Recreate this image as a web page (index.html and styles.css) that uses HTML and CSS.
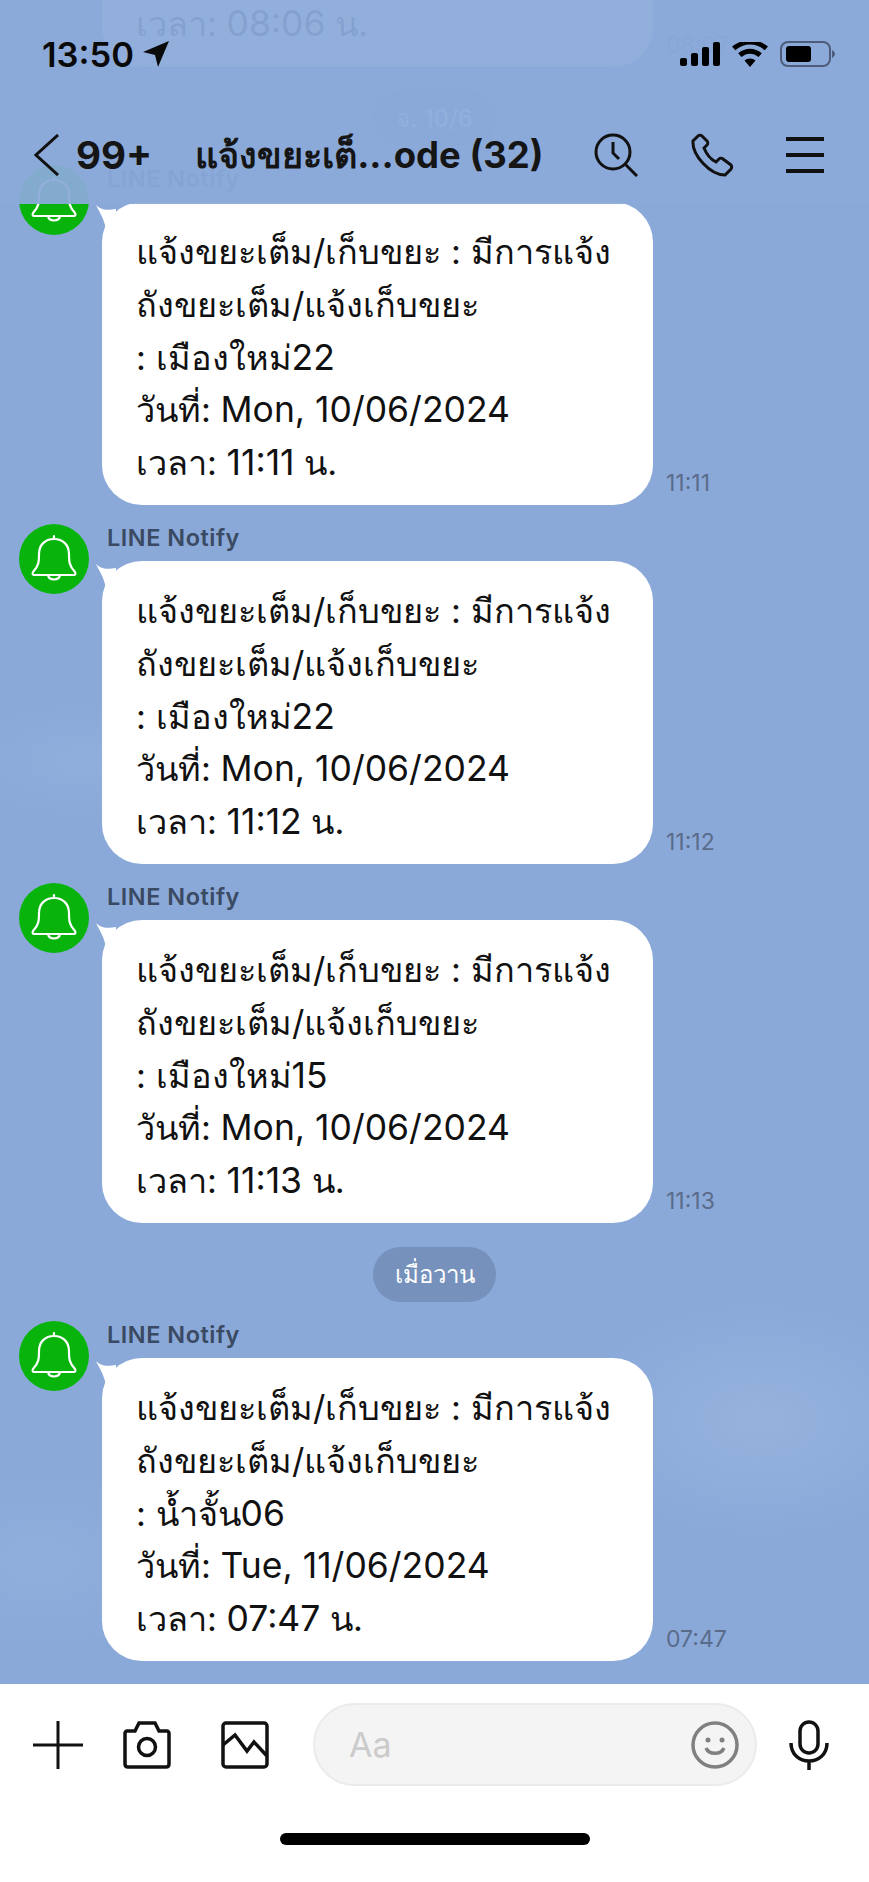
FILE: index.html
```html
<!DOCTYPE html>
<html lang="th">
<head>
  <meta charset="UTF-8">
  <meta name="viewport" content="width=device-width, initial-scale=1.0">
  <title>LINE chat</title>
  <link rel="stylesheet" href="styles.css">
</head>
<body>

<div class="screen">

  <!-- Chat history, pinned to the bottom and clipped at the top -->
  <main class="chat">
    <div class="msg msg-first">
      <div class="msg-body">
        <div class="bubble"><div>เวลา: <span class="en">08:06</span> น.</div></div>
        <span class="time">08:07</span>
      </div>
    </div>

    <div class="date-pill">จ. 10/6</div>

    <div class="msg">
      <div class="avatar">
        <svg viewBox="0 0 70 70"><use href="#bell"/></svg>
      </div>
      <div class="name">LINE Notify</div>
      <div class="msg-body">
        <svg class="tail" viewBox="0 0 20 24"><path d="M0 0C4 4 9 6 20 4L20 24 10 24C8 14 4 8 0 0Z"/></svg>
        <div class="bubble">แจ้งขยะเต็ม/เก็บขยะ : มีการแจ้ง<br>ถังขยะเต็ม/แจ้งเก็บขยะ<br>: เมืองใหม่<span class="en">22</span><br>วันที่: <span class="en">Mon, 10/06/2024</span><br>เวลา: <span class="en">11:11</span> น.</div>
        <span class="time">11:11</span>
      </div>
    </div>

    <div class="msg">
      <div class="avatar">
        <svg viewBox="0 0 70 70"><use href="#bell"/></svg>
      </div>
      <div class="name">LINE Notify</div>
      <div class="msg-body">
        <svg class="tail" viewBox="0 0 20 24"><path d="M0 0C4 4 9 6 20 4L20 24 10 24C8 14 4 8 0 0Z"/></svg>
        <div class="bubble">แจ้งขยะเต็ม/เก็บขยะ : มีการแจ้ง<br>ถังขยะเต็ม/แจ้งเก็บขยะ<br>: เมืองใหม่<span class="en">22</span><br>วันที่: <span class="en">Mon, 10/06/2024</span><br>เวลา: <span class="en">11:12</span> น.</div>
        <span class="time">11:12</span>
      </div>
    </div>

    <div class="msg">
      <div class="avatar">
        <svg viewBox="0 0 70 70"><use href="#bell"/></svg>
      </div>
      <div class="name">LINE Notify</div>
      <div class="msg-body">
        <svg class="tail" viewBox="0 0 20 24"><path d="M0 0C4 4 9 6 20 4L20 24 10 24C8 14 4 8 0 0Z"/></svg>
        <div class="bubble">แจ้งขยะเต็ม/เก็บขยะ : มีการแจ้ง<br>ถังขยะเต็ม/แจ้งเก็บขยะ<br>: เมืองใหม่<span class="en">15</span><br>วันที่: <span class="en">Mon, 10/06/2024</span><br>เวลา: <span class="en">11:13</span> น.</div>
        <span class="time">11:13</span>
      </div>
    </div>

    <div class="date-pill">เมื่อวาน</div>

    <div class="msg">
      <div class="avatar">
        <svg viewBox="0 0 70 70"><use href="#bell"/></svg>
      </div>
      <div class="name">LINE Notify</div>
      <div class="msg-body">
        <svg class="tail" viewBox="0 0 20 24"><path d="M0 0C4 4 9 6 20 4L20 24 10 24C8 14 4 8 0 0Z"/></svg>
        <div class="bubble">แจ้งขยะเต็ม/เก็บขยะ : มีการแจ้ง<br>ถังขยะเต็ม/แจ้งเก็บขยะ<br>: น้ำจั้น<span class="en">06</span><br>วันที่: <span class="en">Tue, 11/06/2024</span><br>เวลา: <span class="en">07:47</span> น.</div>
        <span class="time">07:47</span>
      </div>
    </div>
  </main>

  <!-- Translucent header floats over the scrolled messages -->
  <header class="top">
    <div class="status">
      <div class="clock">
        13:50
        <svg class="loc" viewBox="0 0 27 26"><path d="M26 0L15 26 12 14 0 11Z"/></svg>
      </div>
      <div class="status-icons">
        <svg class="signal" viewBox="0 0 40 24"><rect x="0" y="16" width="7" height="8" rx="2"/><rect x="11" y="11" width="7" height="13" rx="2"/><rect x="22" y="5" width="7" height="19" rx="2"/><rect x="33" y="0" width="7" height="24" rx="2"/></svg>
        <svg class="wifi" viewBox="0 0 36 25"><path d="M18 25L12.500 18.500C15.500 15.800 20.500 15.800 23.500 18.500Z"/><path d="M9.500 15C14.500 10.500 21.500 10.500 26.500 15L29.800 11.300C22.800 5.200 13.200 5.200 6.200 11.300Z"/><path d="M3.300 8.200C12 0.600 24 0.600 32.700 8.200L36 4.500C25.500-4 10.500-4 0 4.500Z"/></svg>
        <svg class="battery" viewBox="0 0 55 26"><rect x="1" y="1" width="49" height="24" rx="7" fill="none" stroke="#4d5c78" stroke-width="2"/><rect x="6" y="5" width="25" height="16" rx="3"/><path d="M52 9c2 1 3 3 3 4s-1 3-3 4z" fill="#4d5c78"/></svg>
      </div>
    </div>
    <div class="navbar">
      <svg class="back" viewBox="0 0 26 42"><path d="M24 1L2 21 24 41"/></svg>
      <span class="unread">99+</span>
      <span class="title">แจ้งขยะเต็<span class="title-en">...ode (32)</span></span>
      <div class="nav-icons">
        <svg class="nav-icon" viewBox="0 0 44 44"><circle cx="19" cy="19" r="17"/><path d="M19 9v11l6 6M31 31l12 12"/></svg>
        <svg class="nav-icon" viewBox="0 0 44 44"><path d="M8 3L3 8C2 22 20 42 35 42L41 36C42 34 42 33 41 32L33 26C32 25 30 25 29 26L26 29C20 26 16 20 14 15L17 12C18 11 18 9 17 8L12 3C11 2 9 2 8 3Z"/></svg>
        <svg class="nav-icon nav-menu" viewBox="0 0 38 36"><path d="M0 2H38M0 18H38M0 34H38"/></svg>
      </div>
    </div>
  </header>

  <footer class="composer">
    <div class="composer-row">
      <svg class="tool tool-plus" viewBox="0 0 50 48"><path d="M25 0V48M0 24H50"/></svg>
      <svg class="tool tool-cam" viewBox="0 0 48 48"><path d="M4 10C3 10 2 11 2 12V43C2 45 3 46 5 46H43C45 46 46 45 46 43V12C46 11 45 10 44 10H36L32 2H16L12 10Z"/><circle cx="24" cy="26" r="8.500"/></svg>
      <svg class="tool tool-pic" viewBox="0 0 48 48"><rect x="2" y="2" width="44" height="44" rx="3"/><path d="M2 24L14 14 26 30 33 21 46 35"/></svg>
      <div class="input-pill">
        <span class="placeholder">Aa</span>
        <svg class="smile" viewBox="0 0 48 48"><circle cx="24" cy="24" r="22"/><path d="M15 27C18 34 30 34 33 27"/><circle class="eye" cx="17" cy="19" r="2.500"/><circle class="eye" cx="31" cy="19" r="2.500"/></svg>
      </div>
      <svg class="tool tool-mic" viewBox="0 0 40 50"><rect x="11" y="2" width="18" height="31" rx="9"/><path d="M2 23C2 47 38 47 38 23M20 41V50"/></svg>
    </div>
    <div class="home-bar"></div>
  </footer>
</div>

<!-- shared bell icon -->
<svg class="defs" width="0" height="0">
  <symbol id="bell" viewBox="0 0 70 70">
    <path d="M14 48C20 42 20 37 20 30C20 21 26 15 35 15C44 15 50 21 50 30C50 37 50 42 56 48C57 50 56 51 55 51H15C14 51 13 50 14 48Z" fill="none" stroke="#fff" stroke-width="2.200"/>
    <path d="M29 51C30 57 40 57 41 51M35 15V12" fill="none" stroke="#fff" stroke-width="2.200" stroke-linecap="round"/>
  </symbol>
</svg>

</body>
</html>
```

FILE: styles.css
```css
* {
  margin: 0;
  padding: 0;
  box-sizing: border-box;
}

body {
  font-family: Inter, "Liberation Sans", "Noto Sans", sans-serif;
  color: #111;
}

.screen {
  position: relative;
  display: flex;
  flex-direction: column;
  width: 869px;
  height: 1882px;
  overflow: hidden;
  background-color: #8aa9d9;
}

/* Messages */
.chat {
  flex: 1;
  min-height: 0;
  display: flex;
  flex-direction: column;
  justify-content: flex-end;
  padding-bottom: 23px;
  background:
    radial-gradient(ellipse 190px 120px at 760px 1420px, rgba(165, 190, 225, 0.45), transparent),
    radial-gradient(ellipse 160px 90px at 40px 1560px, rgba(165, 190, 225, 0.25), transparent),
    radial-gradient(ellipse 140px 60px at 90px 760px, rgba(165, 190, 225, 0.25), transparent),
    #8aa9d9;
}

.msg {
  position: relative;
  flex: none;
  padding-left: 102px;
  padding-top: 56px;
}

.msg-first {
  padding-top: 0;
}

.avatar {
  position: absolute;
  left: 19px;
  top: 19px;
  width: 70px;
  height: 70px;
  border-radius: 50%;
  background: #08b40c;
}

.avatar svg {
  display: block;
  width: 70px;
  height: 70px;
}

.name {
  position: absolute;
  left: 107px;
  top: 20px;
  font-size: 23.500px;
  font-weight: 600;
  letter-spacing: 0.500px;
  line-height: 26px;
  color: #3b4a63;
}

.msg-body {
  position: relative;
  display: flex;
  align-items: flex-end;
}

.tail {
  position: absolute;
  left: -6px;
  top: 3px;
  width: 20px;
  height: 24px;
  fill: #fff;
}

.bubble {
  width: 551px;
  height: 303px;
  padding: 24px 34px 0;
  border-radius: 40px;
  background: #fff;
  font-size: 34.300px;
  line-height: 52.800px;
  white-space: nowrap;
}

/* only the last line of this one is on screen */
.msg-first .bubble {
  display: flex;
  align-items: flex-end;
  padding: 0 34px 16px;
}

.en {
  font-size: 35.500px;
}

.time {
  margin: 0 0 9px 13px;
  font-size: 23px;
  line-height: 26px;
  color: #5a6c8a;
}

.date-pill {
  flex: none;
  align-self: center;
  width: 123px;
  height: 55px;
  margin-top: 24px;
  border-radius: 28px;
  background: #7591bc;
  color: #fff;
  font-size: 24px;
  line-height: 55px;
  text-align: center;
}

/* Header */
.top {
  position: absolute;
  top: 0;
  left: 0;
  right: 0;
  height: 204px;
  background: rgba(139, 170, 218, 0.94);
}

.status {
  display: flex;
  justify-content: space-between;
  align-items: center;
  height: 34px;
  margin-top: 37px;
  padding: 0 34px 0 42px;
}

.clock {
  display: flex;
  align-items: center;
  gap: 9px;
  font-size: 34.500px;
  font-weight: 600;
  color: #0a0a0a;
}

.loc {
  width: 27px;
  height: 26px;
  fill: #0a0a0a;
}

.status-icons {
  display: flex;
  align-items: center;
  gap: 12px;
}

.signal {
  width: 40px;
  height: 24px;
}

.wifi {
  width: 36px;
  height: 25px;
}

.battery {
  width: 55px;
  height: 26px;
}

.navbar {
  display: flex;
  align-items: center;
  height: 44px;
  margin-top: 62px;
  padding-left: 34px;
}

.back {
  width: 26px;
  height: 42px;
  fill: none;
  stroke: #111;
  stroke-width: 3;
}

.unread {
  margin-left: 16px;
  font-size: 38.500px;
  font-weight: 700;
  color: #151515;
}

.title {
  margin-left: 43px;
  font-size: 36px;
  font-weight: 700;
  color: #151515;
}

.title-en {
  font-size: 36.500px;
}

.nav-icons {
  margin-left: auto;
  display: flex;
  align-items: center;
  gap: 52px;
  padding-right: 45px;
}

.nav-icon {
  width: 44px;
  height: 44px;
  fill: none;
  stroke: #111;
  stroke-width: 3;
}

.nav-menu {
  width: 38px;
  height: 36px;
  stroke-width: 4;
}

/* Composer */
.composer {
  flex: none;
  height: 198px;
  background: #fff;
}

.composer-row {
  display: flex;
  align-items: center;
  height: 83px;
  margin-top: 19px;
  padding-left: 33px;
}

.tool {
  flex: none;
  fill: none;
  stroke: #111;
  stroke-width: 3.500;
}

.tool-plus {
  width: 50px;
  height: 48px;
  stroke-width: 3;
}

.tool-cam {
  width: 48px;
  height: 48px;
  margin-left: 40px;
}

.tool-pic {
  width: 48px;
  height: 48px;
  margin-left: 50px;
}

.input-pill {
  flex: none;
  display: flex;
  align-items: center;
  justify-content: space-between;
  width: 444px;
  height: 83px;
  margin-left: 44px;
  padding: 0 16px 0 34px;
  border: 2px solid #ebebeb;
  border-radius: 42px;
  background: #f4f4f4;
}

.placeholder {
  font-size: 34px;
  color: #cbcbcb;
}

.smile {
  width: 48px;
  height: 48px;
  fill: none;
  stroke: #808080;
  stroke-width: 3.500;
}

.smile .eye {
  fill: #808080;
  stroke: none;
}

.tool-mic {
  width: 40px;
  height: 50px;
  margin-left: 32px;
}

.home-bar {
  width: 310px;
  height: 12px;
  margin: 47px 0 0 280px;
  border-radius: 6px;
  background: #000;
}

.defs {
  position: absolute;
}
```
